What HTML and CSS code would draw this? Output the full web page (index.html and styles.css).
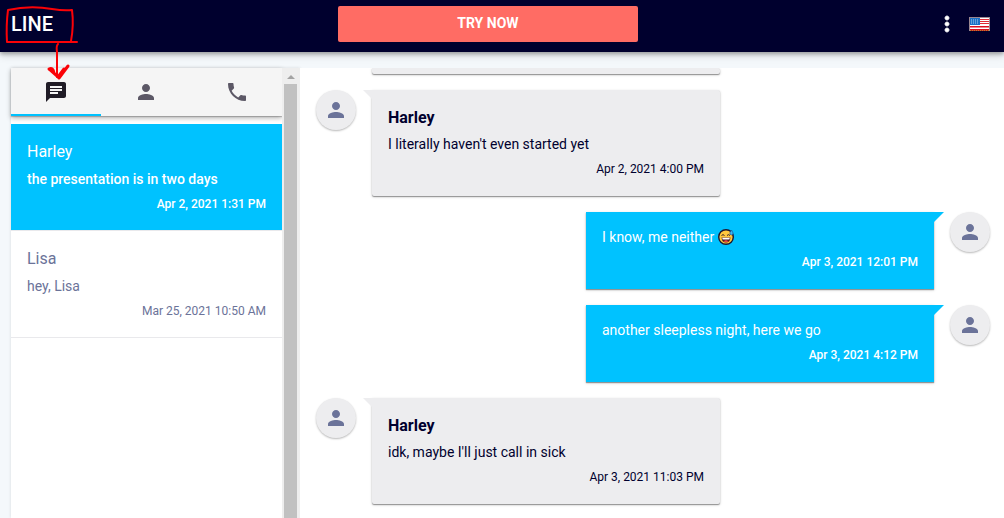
FILE: index.html
```html
<!DOCTYPE html>
<html lang="en">
<head>
<meta charset="utf-8">
<meta name="viewport" content="width=device-width, initial-scale=1">
<title>LINE chat</title>
<link rel="stylesheet" href="styles.css">
</head>
<body>
<svg class="sprite" aria-hidden="true">
  <symbol id="person" viewBox="0 0 24 24"><path d="M12 12c2.21 0 4-1.79 4-4s-1.79-4-4-4-4 1.79-4 4 1.79 4 4 4zm0 2c-2.67 0-8 1.34-8 4v2h16v-2c0-2.66-5.33-4-8-4z"/></symbol>
</svg>
<div class="app">
  <header class="topbar">
    <h1 class="brand">LINE</h1>
    <button class="cta" type="button">TRY NOW</button>
    <div class="actions">
      <button class="icon-button" type="button" aria-label="More options">
        <svg class="icon" viewBox="0 0 24 24"><path d="M12 8c1.100 0 2-.9 2-2s-.9-2-2-2-2 .9-2 2 .9 2 2 2zm0 2c-1.100 0-2 .9-2 2s.9 2 2 2 2-.9 2-2-.9-2-2-2zm0 6c-1.100 0-2 .9-2 2s.9 2 2 2 2-.9 2-2-.9-2-2-2z" stroke="currentColor" stroke-width=".8"/></svg>
      </button>
      <button class="icon-button" type="button" aria-label="Language">
        <svg class="flag" viewBox="0 0 21 14">
          <rect width="21" height="14" fill="#9a8790"/>
          <rect x="1" y="1" width="19" height="12" fill="#fff"/>
          <path fill="#e02a36" d="M10 2h10v1H10zM10 4h10v1H10zM10 6h10v1H10z"/>
          <path fill="#d80f20" d="M1 9h19v1.500H1zM1 12h19v2H1z"/>
          <rect x="1" y="1" width="10" height="7" fill="#1b70c4"/>
          <path d="M2.500 2v5M4.500 2v5M6.500 2v5M8.500 2v5" stroke="#84b6e4" stroke-width=".7"/>
          <path d="M1 13.500h19" stroke="#b08a30" stroke-dasharray="1 1"/>
        </svg>
      </button>
    </div>
  </header>

  <div class="workspace">
    <aside class="sidebar">
      <div class="panel">
        <nav class="tabs" role="tablist" aria-label="Sections">
          <button class="tab tab-active" type="button" role="tab" aria-selected="true" aria-label="Chats">
            <svg class="icon" viewBox="0 0 24 24"><path d="M20 2H4c-1.100 0-1.990.9-1.990 2L2 22l4-4h14c1.100 0 2-.9 2-2V4c0-1.100-.9-2-2-2zM6 9h12v2H6V9zm8 5H6v-2h8v2zm4-6H6V6h12v2z"/></svg>
          </button>
          <button class="tab" type="button" role="tab" aria-selected="false" aria-label="Contacts">
            <svg class="icon"><use href="#person"/></svg>
          </button>
          <button class="tab" type="button" role="tab" aria-selected="false" aria-label="Calls">
            <svg class="icon" viewBox="0 0 24 24"><path d="M6.620 10.790c1.440 2.830 3.760 5.140 6.590 6.590l2.200-2.200c.27-.27.67-.36 1.020-.24 1.120.37 2.330.57 3.570.57.55 0 1 .45 1 1V20c0 .55-.45 1-1 1-9.390 0-17-7.610-17-17 0-.55.45-1 1-1h3.500c.55 0 1 .45 1 1 0 1.250.2 2.450.57 3.570.11.35.03.74-.25 1.020l-2.200 2.200z"/></svg>
          </button>
        </nav>
        <ul class="chats">
          <li class="chat chat-active">
            <span class="name">Harley</span>
            <span class="text">the presentation is in two days</span>
            <time class="date">Apr 2, 2021 1:31 PM</time>
          </li>
          <li class="chat">
            <span class="name">Lisa</span>
            <span class="text">hey, Lisa</span>
            <time class="date">Mar 25, 2021 10:50 AM</time>
          </li>
        </ul>
      </div>
      <div class="scrollbar" aria-hidden="true">
        <svg class="scroll-arrow" viewBox="0 0 8 4"><path d="M4 0l4 4H0z"/></svg>
        <div class="scroll-thumb"></div>
      </div>
    </aside>

    <main class="thread">
      <div class="message">
        <div class="bubble bubble-cut"></div>
      </div>
      <article class="message">
        <div class="avatar"><svg class="icon"><use href="#person"/></svg></div>
        <div class="bubble">
          <span class="name">Harley</span>
          <span class="text">I literally haven't even started yet</span>
          <time class="date">Apr 2, 2021 4:00 PM</time>
        </div>
      </article>
      <article class="message message-own">
        <div class="avatar"><svg class="icon"><use href="#person"/></svg></div>
        <div class="bubble">
          <span class="text">I know, me neither
            <svg class="emoji" viewBox="0 0 16 16" role="img" aria-label="Grinning face with sweat">
              <circle cx="8" cy="8" r="7.300" fill="#ffc83d" stroke="#1d1630" stroke-width="1.400"/>
              <path d="M3.500 6.500q1.500-1.700 3 0M9 6.500q1.500-1.700 3 0" fill="none" stroke="#33202a"/>
              <path d="M3.500 8.500h9q-.4 5-4.500 5t-4.500-5z" fill="#4a1620"/>
              <path d="M4.200 8.700h7.600l-.4 1.700H4.600z" fill="#fff"/>
              <path d="M5.600 12.200q2.400-1.700 4.800 0-2.400 1.800-4.800 0z" fill="#f0443e"/>
              <path d="M13.500 1q-2.300 3.100-1.500 4.300 1.500 1.300 2.900 0Q15.500 4 13.500 1z" fill="#39b7f5" stroke="#1d4a90" stroke-width=".6"/>
            </svg>
          </span>
          <time class="date">Apr 3, 2021 12:01 PM</time>
        </div>
      </article>
      <article class="message message-own">
        <div class="avatar"><svg class="icon"><use href="#person"/></svg></div>
        <div class="bubble">
          <span class="text">another sleepless night, here we go</span>
          <time class="date">Apr 3, 2021 4:12 PM</time>
        </div>
      </article>
      <article class="message">
        <div class="avatar"><svg class="icon"><use href="#person"/></svg></div>
        <div class="bubble">
          <span class="name">Harley</span>
          <span class="text">idk, maybe I'll just call in sick</span>
          <time class="date">Apr 3, 2021 11:03 PM</time>
        </div>
      </article>
    </main>
  </div>
</div>

<svg class="annotation" viewBox="0 0 84 84" aria-hidden="true">
  <path d="M8 10Q6 25 7 42M7 42H77M8 10Q30 5 52 9Q64 11 72 10Q74 25 71 41M58 44Q56 46 57 52V77"/>
  <path class="annotation-head" d="M49 69Q53 67 54 73L59 78L68 66M49 69L58 77L64 69"/>
</svg>
</body>
</html>
```
FILE: styles.css
```css
* { box-sizing: border-box; }

body {
  margin: 0;
  background: #f4f8fb;
  color: #00002e;
  font: 400 14px/20px Roboto, sans-serif;
}

button {
  padding: 0;
  border: 0;
  background: none;
  color: inherit;
  font: inherit;
  cursor: pointer;
}

.sprite {
  position: absolute;
  width: 0;
  height: 0;
}

.icon {
  display: block;
  width: 24px;
  height: 24px;
  fill: currentColor;
}

.app {
  display: flex;
  flex-direction: column;
  height: 100vh;
  overflow: hidden;
}

.topbar {
  display: grid;
  grid-template-columns: 13fr 300px 14fr;
  align-items: center;
  padding: 6px 14px 10px 11px;
  background: #00002e;
  color: #fff;
  box-shadow: 0 2px 4px rgba(0, 0, 0, .3), 0 4px 8px rgba(0, 0, 0, .12);
}

.brand {
  margin: 0;
  font-size: 20px;
  font-weight: 500;
  line-height: 32px;
}

.cta {
  height: 36px;
  padding-bottom: 2px;
  border-radius: 2px;
  background: #ff6c64;
  font-weight: 700;
}

.actions {
  display: flex;
  justify-content: flex-end;
  align-items: center;
  gap: 10px;
}

.flag {
  display: block;
  width: 21px;
  height: 14px;
}

.workspace {
  flex: 1;
  display: flex;
  min-height: 0;
  padding: 16px 0 0 11px;
}

.sidebar {
  flex: 0 0 289px;
  display: flex;
  background: #fff;
  box-shadow: 0 0 3px rgba(0, 0, 0, .12);
}

.panel { flex: 1; }

.tabs {
  display: grid;
  grid-template-columns: repeat(3, 1fr);
  height: 48px;
  background: #f5f5f5;
  color: #5c5866;
  box-shadow: 0 1px 1px rgba(0, 0, 0, .2), 0 2px 5px rgba(0, 0, 0, .3);
}

.tab {
  display: grid;
  place-items: center;
}

.tab-active {
  color: #201c26;
  box-shadow: inset 0 -2px #00c2ff;
}

.chats {
  margin: 0;
  padding: 8px 0 0;
  list-style: none;
}

.chat {
  display: flex;
  flex-direction: column;
  gap: 5px;
  padding: 16px;
  border-bottom: 1px solid #e9e9ec;
  color: #6b7399;
}

.chat-active {
  background: #00c2ff;
  background-clip: padding-box;
  color: #fff;
}

.chat-active .text,
.chat-active .date,
.message-own .date { font-weight: 500; }

.name {
  font-size: 16px;
  line-height: 24px;
}

.date {
  align-self: flex-end;
  font-size: 12px;
}

.scrollbar {
  display: flex;
  flex-direction: column;
  flex: 0 0 18px;
  padding: 7px 3px 0 2px;
  background: #eee;
}

.scroll-arrow {
  align-self: center;
  width: 8px;
  height: 4px;
  margin-bottom: 5px;
  fill: #a3a3a3;
}

.scroll-thumb {
  flex: 1;
  background: #c1c1c1;
}

.thread {
  flex: 1;
  display: flex;
  flex-direction: column;
  gap: 16px;
  overflow: hidden;
  padding: 0 14px 14px 16px;
  background: #fff;
}

.message {
  display: flex;
  gap: 16px;
}

.message-own { flex-direction: row-reverse; }

.avatar {
  display: grid;
  place-items: center;
  flex: none;
  width: 40px;
  height: 40px;
  border-radius: 50%;
  background: #ededef;
  color: #6b7399;
  box-shadow: 0 1px 2px rgba(0, 0, 0, .28);
}

.bubble {
  position: relative;
  display: flex;
  flex-direction: column;
  gap: 5px;
  width: calc(50% + 11px);
  padding: 15px 16px 17px;
  border-radius: 0 2px 2px 2px;
  background: #ededef;
  box-shadow: 0 1px 1px rgba(0, 0, 0, .35), 0 1px 3px rgba(0, 0, 0, .18);
}

.bubble::before {
  content: "";
  position: absolute;
  top: 0;
  right: 100%;
  border-top: 9px solid #ededef;
  border-left: 9px solid transparent;
}

.bubble .name {
  margin-bottom: -2px;
  font-weight: 700;
  line-height: 26px;
}

.bubble-cut {
  margin-left: 56px;
  padding: 6px 0 0;
}

.bubble-cut::before { display: none; }

.message-own .bubble {
  background: #00c2ff;
  color: #fff;
  border-radius: 0;
}

.message-own .bubble::before {
  right: auto;
  left: 100%;
  border-top: 10px solid #00c2ff;
  border-left: 0;
  border-right: 10px solid transparent;
}

.emoji {
  width: 16px;
  height: 16px;
  vertical-align: -3px;
}

.annotation {
  position: absolute;
  top: 0;
  left: 0;
  width: 84px;
  height: 84px;
  fill: none;
  stroke: #fb0207;
  stroke-width: 2;
  stroke-linecap: round;
  stroke-linejoin: round;
  pointer-events: none;
}

.annotation-head { stroke-width: 3; }
```
